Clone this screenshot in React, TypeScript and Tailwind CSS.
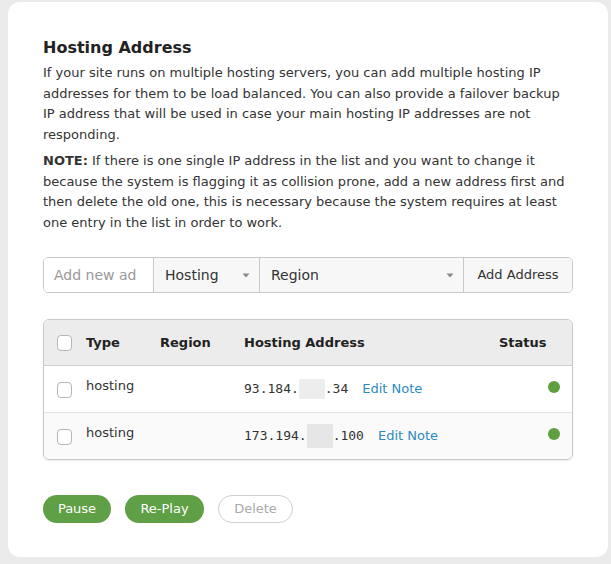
import React from "react";

const Caret = () => (
  <svg width="8" height="5" viewBox="0 0 8 5" className="shrink-0">
    <path d="M0.5 0.5 L7.5 0.5 L4 4.5 Z" fill="#8a8a8a" />
  </svg>
);

const Check = () => (
  <span className="block w-[15px] h-[16px] rounded-[4px] border border-[#b5b5b5] bg-white" />
);

const mono = { fontFamily: '"DejaVu Sans Mono", monospace' };

export default function App() {
  return (
    <div className="min-h-[564px] w-[611px] bg-[#ebebeb] pt-[2px] pl-[8px] pr-[3px]" style={{ fontFamily: '"DejaVu Sans", sans-serif' }}>
      <div className="w-[600px] h-[555px] bg-white rounded-[12px] px-[35px] pt-[34px]">
        <h2 className="text-[16px] font-bold text-[#222] leading-[24px]">Hosting Address</h2>
        <p className="mt-[3px] text-[13px] leading-[20.5px] text-[#333]">
          If your site runs on multiple hosting servers, you can add multiple hosting IP addresses for them to be load balanced. You can also provide a failover backup IP address that will be used in case your main hosting IP addresses are not responding.
        </p>
        <p className="mt-[6px] text-[13px] leading-[20.5px] text-[#333] pr-[2px]">
          <b>NOTE:</b> If there is one single IP address in the list and you want to change it because the system is flagging it as collision prone, add a new address first and then delete the old one, this is necessary because the system requires at least one entry in the list in order to work.
        </p>

        <div className="mt-[24px] flex h-[36px] w-[530px] rounded-[5px] border border-[#c8c8c8] overflow-hidden text-[14px]">
          <div className="w-[110px] bg-white flex items-center pl-[10px] text-[#999] overflow-hidden whitespace-nowrap border-r border-[#c8c8c8]">Add new ad</div>
          <div className="w-[106px] bg-[#f7f7f7] flex items-center justify-between pl-[11px] pr-[9px] text-[#333] border-r border-[#c8c8c8]">
            <span>Hosting</span>
            <Caret />
          </div>
          <div className="w-[204px] bg-[#f7f7f7] flex items-center justify-between pl-[11px] pr-[9px] text-[#333] border-r border-[#c8c8c8]">
            <span>Region</span>
            <Caret />
          </div>
          <div className="flex-1 bg-[#f7f7f7] flex items-center justify-center text-[13px] text-[#333]">Add Address</div>
        </div>

        <div className="mt-[26px] w-[530px] rounded-[6px] border border-[#c8c8c8] overflow-hidden shadow-[0_1px_2px_rgba(0,0,0,0.08)]">
          <div className="grid grid-cols-[42px_74px_84px_1fr_73px] h-[46px] items-center bg-[#ececec] border-b border-[#d0d0d0] text-[13px] font-bold text-[#222]">
            <div className="pl-[13px]"><Check /></div>
            <div>Type</div>
            <div>Region</div>
            <div>Hosting Address</div>
            <div>Status</div>
          </div>
          <div className="grid grid-cols-[42px_74px_84px_1fr_73px] h-[47px] items-center bg-white border-b border-[#e2e2e2] text-[13px] text-[#333]">
            <div className="pl-[13px] pt-[2px]"><Check /></div>
            <div className="-mt-[6px]">hosting</div>
            <div></div>
            <div className="flex items-center">
              <span style={mono}>93.184.</span>
              <span className="inline-block h-[20px] w-[26px] bg-[#ededed]" />
              <span style={mono}>.34</span>
              <span className="ml-[14px] text-[#2a8bc0]">Edit Note</span>
            </div>
            <div className="flex justify-end pr-[12px] -mt-[4px]"><span className="w-[12px] h-[12px] rounded-full bg-[#5f9f3f]" /></div>
          </div>
          <div className="grid grid-cols-[42px_74px_84px_1fr_73px] h-[46px] items-center bg-[#fafafa] text-[13px] text-[#333]">
            <div className="pl-[13px] pt-[2px]"><Check /></div>
            <div className="-mt-[6px]">hosting</div>
            <div></div>
            <div className="flex items-center">
              <span style={mono}>173.194.</span>
              <span className="inline-block h-[24px] w-[26px] bg-[#e6e6e6]" />
              <span style={mono}>.100</span>
              <span className="ml-[14px] text-[#2a8bc0]">Edit Note</span>
            </div>
            <div className="flex justify-end pr-[12px] -mt-[4px]"><span className="w-[12px] h-[12px] rounded-full bg-[#5f9f3f]" /></div>
          </div>
        </div>

        <div className="mt-[35px] flex gap-[14px] text-[13px]">
          <button className="h-[28px] w-[68px] rounded-full bg-[#5f9f45] text-white">Pause</button>
          <button className="h-[28px] w-[79px] rounded-full bg-[#5f9f45] text-white">Re-Play</button>
          <button className="h-[28px] w-[75px] rounded-full border border-[#cfcfcf] bg-white text-[#aaa]">Delete</button>
        </div>
      </div>
    </div>
  );
}
